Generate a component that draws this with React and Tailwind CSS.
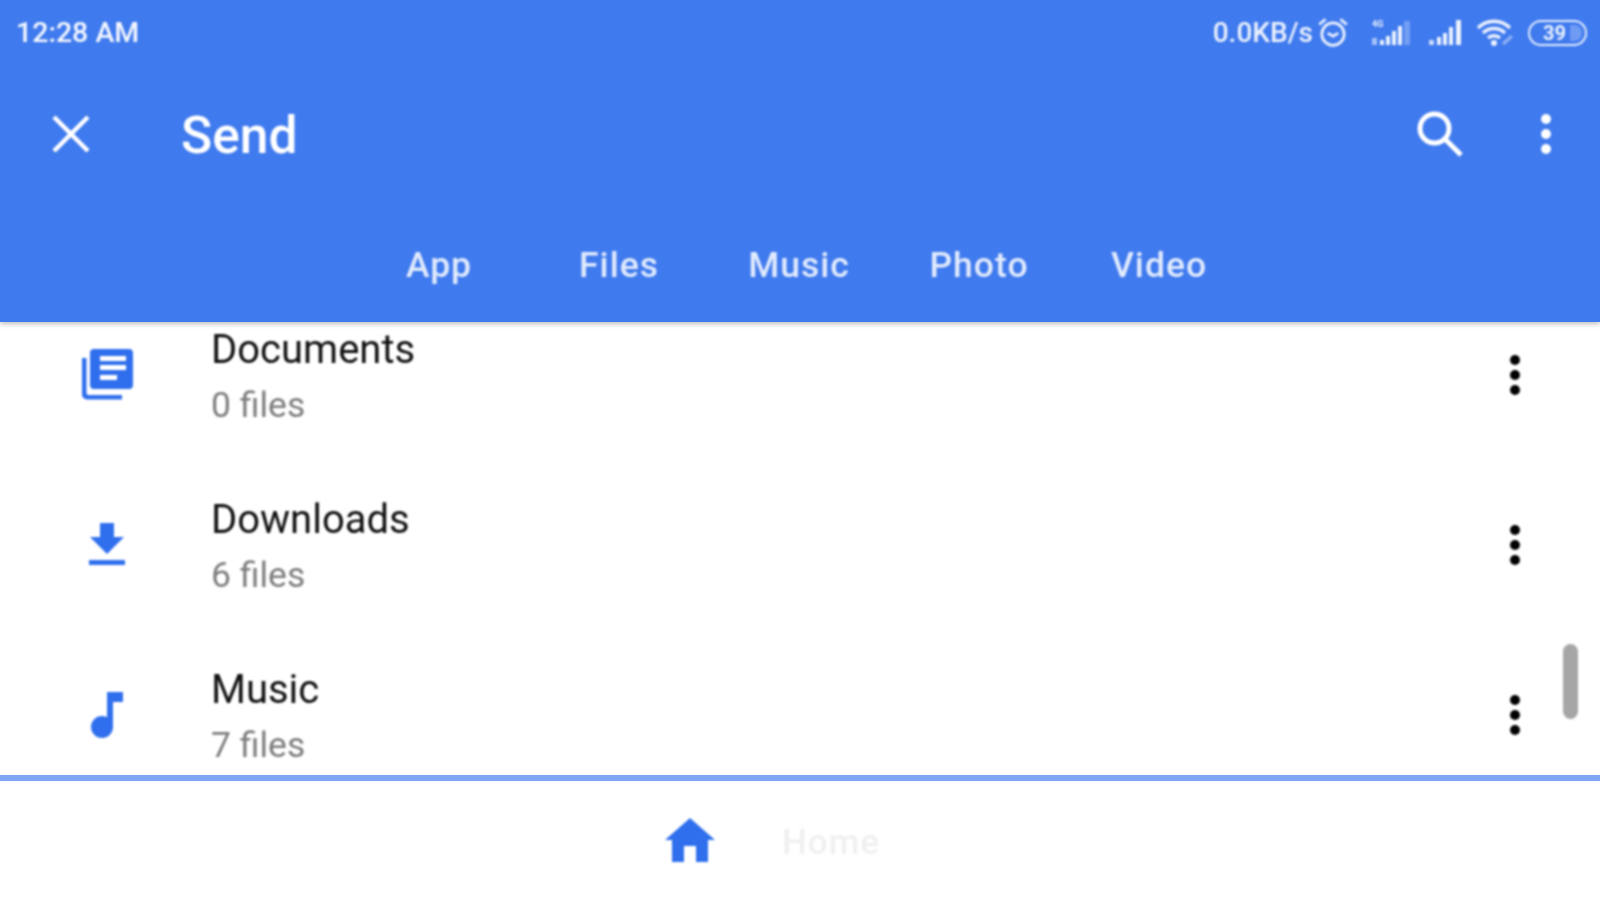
import React from "react";

const BLUE = "#2f6fed";

function Dots({ className }) {
  return (
    <div className={"flex flex-col items-center gap-[5px] " + className}>
      <span className="w-[10px] h-[10px] rounded-full bg-current" />
      <span className="w-[10px] h-[10px] rounded-full bg-current" />
      <span className="w-[10px] h-[10px] rounded-full bg-current" />
    </div>
  );
}

function DocIcon() {
  return (
    <svg width="52" height="52" viewBox="0 0 52 52" fill={BLUE}>
      <path d="M1 9h4.5v35a2 2 0 0 0 2 2H41v4.5H6a5 5 0 0 1-5-5z" />
      <path fillRule="evenodd" d="M13 0h35a4 4 0 0 1 4 4v32a4 4 0 0 1-4 4H13a4 4 0 0 1-4-4V4a4 4 0 0 1 4-4zM19 7v5h26V7zM19 16v5h26v-5zM19 26v5h17v-5z" />
    </svg>
  );
}

function DownloadIcon() {
  return (
    <svg width="36" height="44" viewBox="0 0 36 44" fill={BLUE}>
      <path d="M11 0h14v14h10L18 31 1 14h10z" />
      <rect x="0" y="37" width="36" height="5" />
    </svg>
  );
}

function NoteIcon() {
  return (
    <svg width="32" height="46" viewBox="0 0 32 46" fill={BLUE}>
      <path d="M16 0h16v10H22v25h-6z" />
      <circle cx="11" cy="35" r="11" />
    </svg>
  );
}

function StatusIcons() {
  return (
    <div className="flex items-center text-white/90">
      <svg width="34" height="34" viewBox="0 0 32 32" fill="none" stroke="currentColor" strokeWidth="2.6" className="ml-[3px] -mt-[2px]">
        <circle cx="16" cy="18" r="10.5" />
        <path d="M11 17l5 3 5-3M3 9l6-5M29 9l-6-5" />
      </svg>
      <svg width="46" height="28" viewBox="0 0 46 28" fill="currentColor" className="ml-[21px]">
        <text x="1" y="8" fontSize="9" fontWeight="700" fontFamily="Roboto, sans-serif">4G</text>
        <rect x="1" y="19" width="5" height="7" opacity="0.6" />
        <rect x="9" y="21" width="4" height="5" />
        <rect x="15" y="17" width="4" height="9" />
        <rect x="21" y="12" width="4" height="14" />
        <rect x="27" y="7" width="4" height="19" />
        <rect x="33" y="2" width="6" height="24" opacity="0.3" />
      </svg>
      <svg width="36" height="28" viewBox="0 0 36 28" fill="currentColor" className="ml-[12px]">
        <rect x="0" y="21" width="5" height="5" opacity="0.8" />
        <rect x="8" y="18" width="4" height="8" />
        <rect x="14" y="14" width="4" height="12" />
        <rect x="20" y="8" width="4" height="18" />
        <rect x="27" y="1" width="5" height="25" />
      </svg>
      <svg width="40" height="30" viewBox="0 0 40 30" fill="none" stroke="currentColor" strokeWidth="3.4" className="ml-[11px]">
        <path d="M2 10c9-9 23-9 32 0M7 15c6-6 16-6 22 0M12 20c3-3 9-3 12 0" />
        <circle cx="18" cy="25" r="3" fill="currentColor" stroke="none" />
        <path d="M27 26l9-8" opacity="0.45" />
      </svg>
      <div className="ml-[12px] w-[59px] h-[26px] rounded-full border-2 border-white/85 flex items-center pl-[13px] overflow-hidden">
        <span className="text-[20px] leading-none font-bold">39</span>
        <span className="ml-[4px] w-[12px] h-[16px] rounded-r-full bg-white/25" />
      </div>
    </div>
  );
}

function Row({ icon, title, files }) {
  return (
    <div className="h-[170px] shrink-0 flex items-center pl-[81px] pr-[80px]">
      <div className="w-[52px] flex justify-center">{icon}</div>
      <div className="ml-[78px] flex-1 pt-[4px]">
        <div className="text-[40px] leading-[44px] text-[#111111]">{title}</div>
        <div className="mt-[11px] text-[35.5px] leading-[44px] text-[#7d7d7d]">{files}</div>
      </div>
      <Dots className="text-[#000000]" />
    </div>
  );
}

export default function App() {
  return (
    <div className="w-[1600px] h-[900px] flex flex-col overflow-hidden bg-white" style={{ fontFamily: "Roboto, sans-serif" }}>
      <header className="relative z-10 h-[322px] shrink-0 bg-[#3f7aee] text-white shadow-[0_2px_5px_rgba(0,0,0,0.25)]">
        <div className="h-[66px] pl-[16px] pr-[13px] flex items-center justify-between blur-[0.8px]">
          <span className="text-[28.5px] font-medium text-white/95">12:28 AM</span>
          <div className="flex items-center">
            <span className="text-[28px] font-medium text-white/90">0.0KB/s</span>
            <StatusIcons />
          </div>
        </div>
        <div className="mt-[35px] h-[70px] pl-[52px] pr-[49px] flex items-center blur-[0.8px]">
          <svg width="38" height="38" viewBox="0 0 38 38" stroke="white" strokeWidth="4.5" fill="none" className="-mt-[4px]">
            <path d="M2 2l34 34M36 2L2 36" />
          </svg>
          <span className="ml-[91px] text-[51.5px] font-medium">Send</span>
          <svg width="46" height="46" viewBox="0 0 46 46" stroke="white" strokeWidth="5" fill="none" className="ml-auto mr-[78px] -mt-[4px]">
            <circle cx="17.5" cy="17.5" r="14.5" />
            <path d="M28 28l16 16" />
          </svg>
          <Dots className="text-white -mt-[4px]" />
        </div>
        <nav className="mt-[69px] pl-[349px] flex blur-[0.8px]">
          {["App", "Files", "Music", "Photo", "Video"].map((tab) => (
            <div key={tab} className="w-[180px] text-center text-[35.5px] leading-[50px] font-medium tracking-[1px] text-white/85">
              {tab}
            </div>
          ))}
        </nav>
      </header>

      <main className="relative flex-1 overflow-hidden">
        <div className="-mt-[32px] blur-[0.8px]">
          <Row icon={<DocIcon />} title="Documents" files="0 files" />
          <Row icon={<DownloadIcon />} title="Downloads" files="6 files" />
          <Row icon={<NoteIcon />} title="Music" files="7 files" />
        </div>
        <div className="absolute right-[22px] top-[322px] w-[15px] h-[75px] rounded-full bg-[#a6a6a6] blur-[0.8px]" />
      </main>

      <footer className="h-[125px] shrink-0 border-t-[6px] border-[#7fa6f4] flex items-center pl-[665px]">
        <svg width="50" height="44" viewBox="0 0 50 44" fill={BLUE} className="mt-[-2px] blur-[0.8px]">
          <path d="M25 0l25 22h-7v22H31V28H19v16H7V22H0z" />
        </svg>
        <span className="ml-[67px] mt-[6px] text-[35px] font-medium tracking-[1px] text-[#f0f0f0] blur-[0.8px]">Home</span>
      </footer>
    </div>
  );
}
